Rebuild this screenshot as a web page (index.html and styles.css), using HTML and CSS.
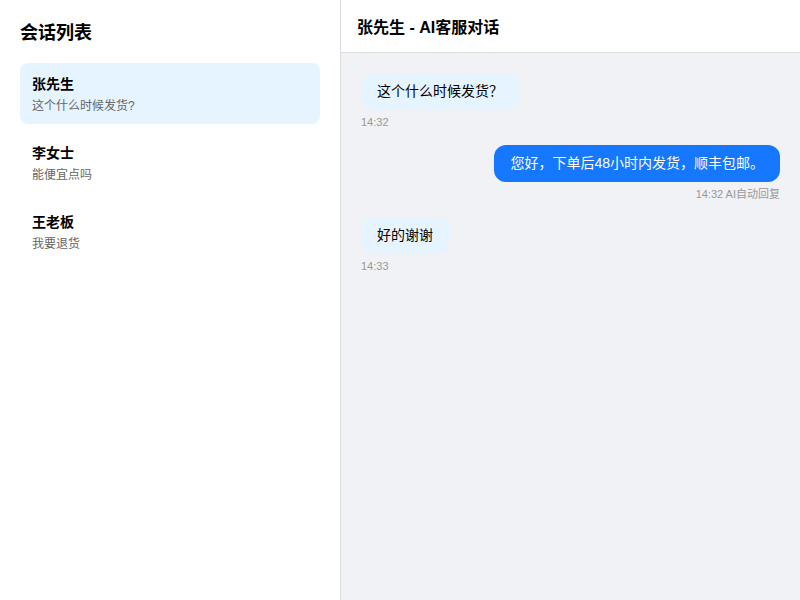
FILE: index.html
```html
<!DOCTYPE html>
<html lang="zh-CN">
<head>
  <meta charset="UTF-8">
  <meta name="viewport" content="width=device-width, initial-scale=1.0">
  <title>AI客服对话</title>
  <link rel="stylesheet" href="styles.css">
</head>
<body>
  <div class="app">
    <aside class="sidebar">
      <h2 class="sidebar-title">会话列表</h2>
      <ul class="session-list">
        <li class="session active">
          <div class="session-name">张先生</div>
          <div class="session-preview">这个什么时候发货?</div>
        </li>
        <li class="session">
          <div class="session-name">李女士</div>
          <div class="session-preview">能便宜点吗</div>
        </li>
        <li class="session">
          <div class="session-name">王老板</div>
          <div class="session-preview">我要退货</div>
        </li>
      </ul>
    </aside>

    <main class="chat">
      <header class="chat-header">张先生 - AI客服对话</header>
      <div class="messages">
        <div class="message customer">
          <div class="bubble">这个什么时候发货？</div>
          <div class="time">14:32</div>
        </div>
        <div class="message agent">
          <div class="bubble">您好，下单后48小时内发货，顺丰包邮。</div>
          <div class="time">14:32 AI自动回复</div>
        </div>
        <div class="message customer">
          <div class="bubble">好的谢谢</div>
          <div class="time">14:33</div>
        </div>
      </div>
    </main>
  </div>
</body>
</html>
```

FILE: styles.css
```css
* {
  box-sizing: border-box;
}
body {
  margin: 0;
  font-family: "Liberation Sans", "Noto Sans CJK SC", sans-serif;
  color: #000;
  background-color: #fff;
}
.app {
  display: flex;
  height: 100vh;
}
.sidebar {
  width: 341px;
  padding: 20px;
  border-right: 1px solid #ddd;
  background-color: #fff;
}
.sidebar-title {
  margin: 0 0 17px;
  font-size: 18px;
  line-height: 26px;
  font-weight: bold;
}
.session-list {
  list-style: none;
  margin: 0;
  padding: 0;
  display: flex;
  flex-direction: column;
  gap: 8px;
}
.session {
  padding: 10px 12px 9px;
  border-radius: 8px;
  cursor: pointer;
}
.session.active {
  background-color: #e6f4ff;
}
.session-name {
  font-size: 14px;
  line-height: 22px;
  font-weight: bold;
}
.session-preview {
  margin-top: 2px;
  font-size: 12px;
  line-height: 18px;
  color: #666;
}
.chat {
  flex: 1;
  display: flex;
  flex-direction: column;
  background-color: #f0f2f5;
}
.chat-header {
  height: 53px;
  padding: 0 16px;
  display: flex;
  align-items: center;
  font-size: 16px;
  font-weight: bold;
  background-color: #fff;
  border-bottom: 1px solid #ddd;
}
.messages {
  flex: 1;
  padding: 20px;
  display: flex;
  flex-direction: column;
  gap: 15px;
}
.message {
  display: flex;
  flex-direction: column;
  align-items: flex-start;
}
.message.agent {
  align-items: flex-end;
}
.bubble {
  padding: 8px 16px;
  font-size: 14px;
  line-height: 21px;
  border-radius: 12px;
  background-color: #e6f4ff;
}
.agent .bubble {
  background-color: #1677ff;
  color: #fff;
}
.time {
  margin-top: 4px;
  font-size: 11px;
  line-height: 16px;
  color: #999;
}
```
